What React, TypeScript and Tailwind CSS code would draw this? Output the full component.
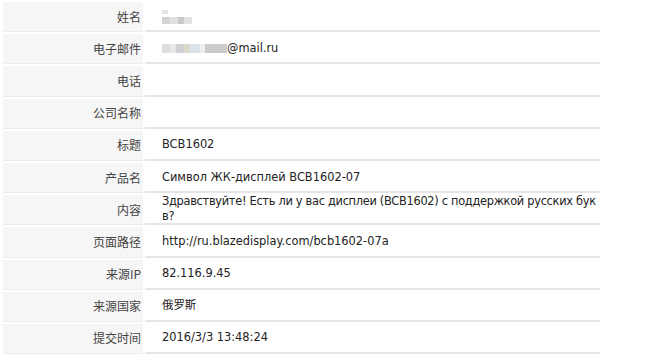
import React from 'react';

type Row = { label: string; value?: React.ReactNode; tight?: boolean };

const Blur = ({ w, c, h = 'h-[7px]' }: { w: string; c: string; h?: string }) => (
    <span className={`inline-block ${w} ${h} ${c}`} />
);

const rows: Row[] = [
    {
        label: '姓名',
        value: (
            <span className="flex flex-col gap-[3px] pt-[1px]">
                <span className="flex">
                    <Blur w="w-[6px]" h="h-[4px]" c="bg-[#e6e6e6]" />
                </span>
                <span className="flex">
                    <Blur w="w-[8px]" c="bg-[#d4d4d4]" />
                    <Blur w="w-[8px]" c="bg-[#e0e0e0]" />
                    <Blur w="w-[6px]" c="bg-[#c8c8c8]" />
                    <Blur w="w-[8px]" c="bg-[#e2e2e2]" />
                </span>
            </span>
        ),
    },
    {
        label: '电子邮件',
        value: (
            <span className="flex items-center">
                <Blur w="w-[8px]" h="h-[9px]" c="bg-[#dedede]" />
                <Blur w="w-[6px]" h="h-[9px]" c="bg-[#e8e8e8]" />
                <Blur w="w-[8px]" h="h-[9px]" c="bg-[#cfcfd4]" />
                <Blur w="w-[6px]" h="h-[9px]" c="bg-[#ddd8cc]" />
                <Blur w="w-[10px]" h="h-[9px]" c="bg-[#dde2ea]" />
                <Blur w="w-[5px]" h="h-[9px]" c="bg-[#eeeeee]" />
                <Blur w="w-[22px]" h="h-[9px]" c="bg-[#cbcbcb]" />
                <span>@mail.ru</span>
            </span>
        ),
    },
    { label: '电话' },
    { label: '公司名称' },
    { label: '标题', value: 'BCB1602' },
    { label: '产品名', value: 'Символ ЖК-дисплей BCB1602-07' },
    {
        label: '内容',
        value: 'Здравствуйте! Есть ли у вас дисплеи (BCB1602) с поддержкой русских букв?',
        tight: true,
    },
    { label: '页面路径', value: 'http://ru.blazedisplay.com/bcb1602-07a' },
    { label: '来源IP', value: '82.116.9.45' },
    { label: '来源国家', value: '俄罗斯' },
    { label: '提交时间', value: '2016/3/3 13:48:24' },
];

export default function App() {
    return (
        <div className="w-[660px] h-[355px] overflow-hidden bg-white pl-[3px] pt-[2px] font-['DejaVu_Sans','Noto_Sans_CJK_SC',sans-serif]">
            <div className="flex w-[597px] flex-col gap-[2px]">
                {rows.map((row) => (
                    <div key={row.label} className="flex h-[30.2px] gap-[2px]">
                        {/* Label */}
                        <div className="flex w-[140px] shrink-0 items-center justify-end border-b border-[#ececec] bg-[#f6f6f6] pr-[2px] text-[12px] text-[#444] font-['Noto_Sans_CJK_SC',sans-serif]">
                            {row.label}
                        </div>
                        {/* Value */}
                        <div className="flex min-w-0 flex-1 items-center border-b-2 border-[#e6e6e6] pl-[17px] pr-0 text-[11.4px] leading-[15px] text-[#222]">
                            <div className={row.tight ? 'min-w-0 break-all tracking-[-0.3px]' : 'min-w-0 break-all'}>
                                {row.value}
                            </div>
                        </div>
                    </div>
                ))}
            </div>
        </div>
    );
}
